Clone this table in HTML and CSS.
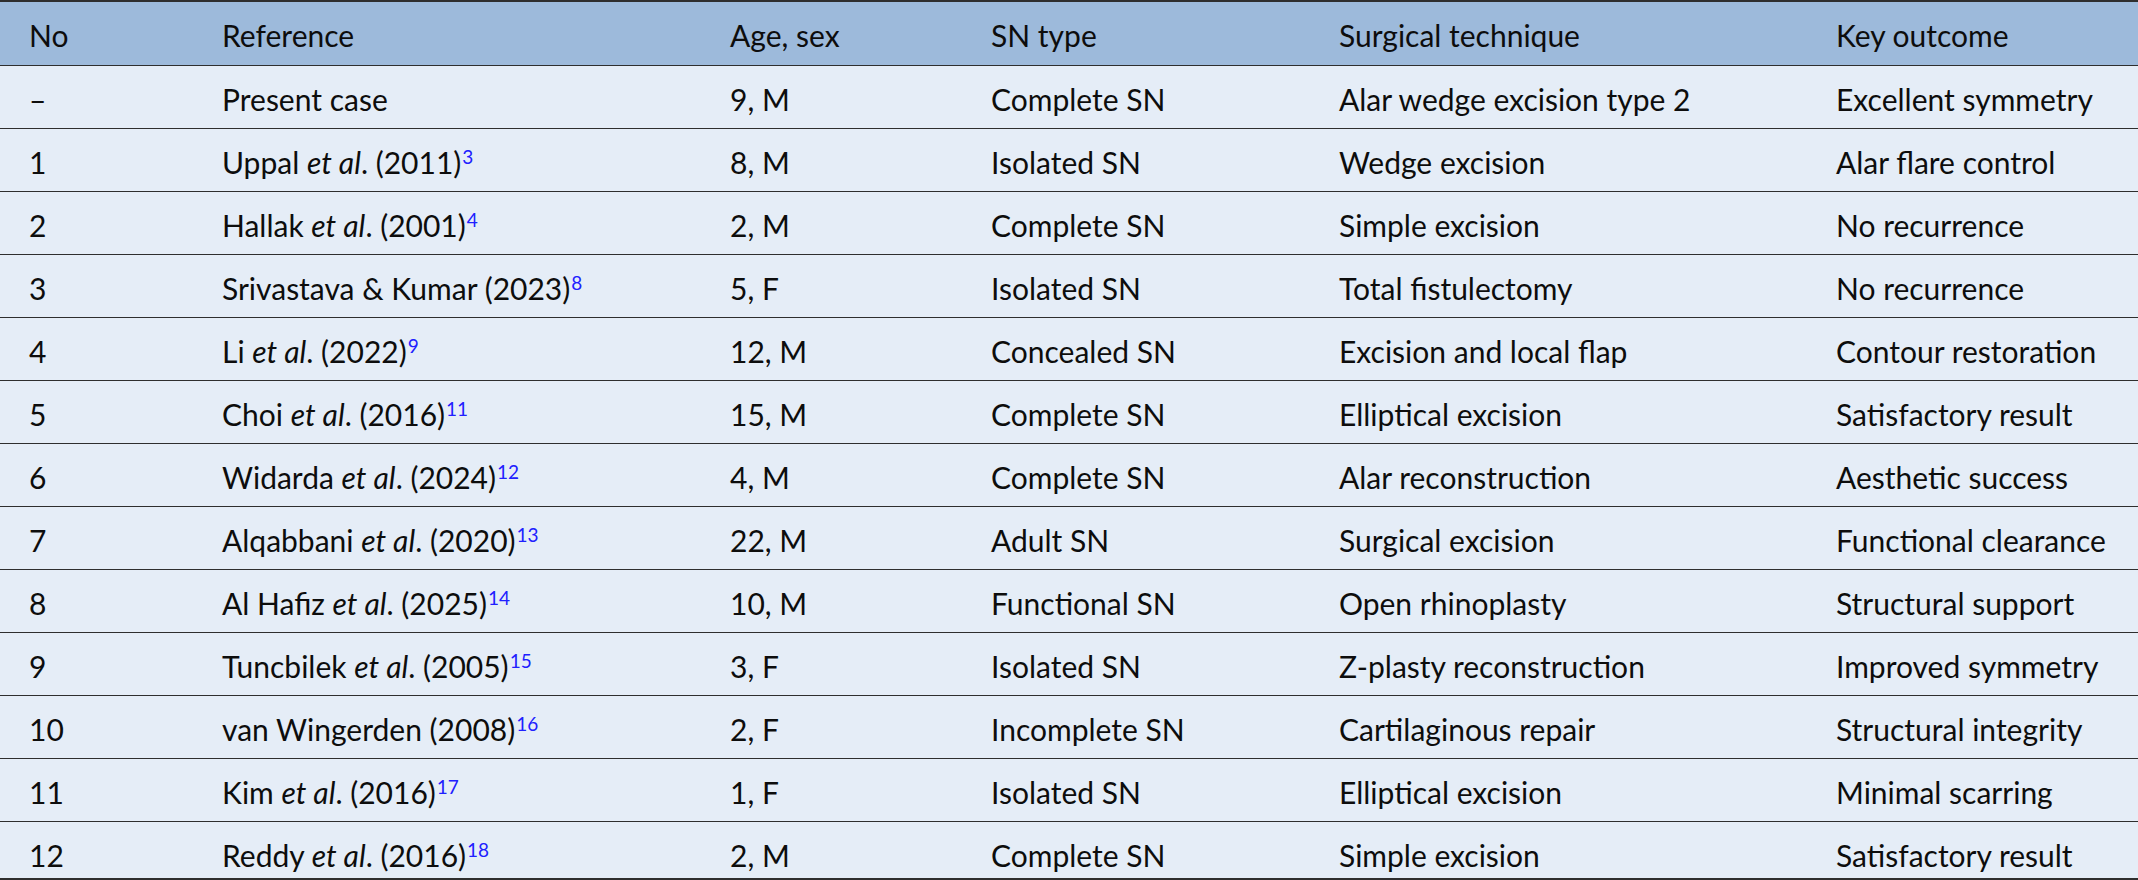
FILE: index.html
```html
<!DOCTYPE html>
<html lang="en">
<head>
<meta charset="utf-8">
<title>Surgical management of supernumerary nostril – comparison table</title>
<link rel="stylesheet" href="styles.css">
</head>
<body>
<table class="cases">
  <colgroup>
    <col class="c-no">
    <col class="c-ref">
    <col class="c-age">
    <col class="c-type">
    <col class="c-tech">
    <col class="c-out">
  </colgroup>
  <thead>
    <tr>
      <th>No</th>
      <th>Reference</th>
      <th>Age, sex</th>
      <th>SN type</th>
      <th>Surgical technique</th>
      <th>Key outcome</th>
    </tr>
  </thead>
  <tbody>
    <tr>
      <td>–</td>
      <td>Present case</td>
      <td>9, M</td>
      <td>Complete SN</td>
      <td>Alar wedge excision type 2</td>
      <td>Excellent symmetry</td>
    </tr>
    <tr>
      <td>1</td>
      <td>Uppal <i>et al</i>. (2011)<sup class="ref">3</sup></td>
      <td>8, M</td>
      <td>Isolated SN</td>
      <td>Wedge excision</td>
      <td>Alar flare control</td>
    </tr>
    <tr>
      <td>2</td>
      <td>Hallak <i>et al</i>. (2001)<sup class="ref">4</sup></td>
      <td>2, M</td>
      <td>Complete SN</td>
      <td>Simple excision</td>
      <td>No recurrence</td>
    </tr>
    <tr>
      <td>3</td>
      <td>Srivastava &amp; Kumar (2023)<sup class="ref">8</sup></td>
      <td>5, F</td>
      <td>Isolated SN</td>
      <td>Total fistulectomy</td>
      <td>No recurrence</td>
    </tr>
    <tr>
      <td>4</td>
      <td>Li <i>et al</i>. (2022)<sup class="ref">9</sup></td>
      <td>12, M</td>
      <td>Concealed SN</td>
      <td>Excision and local flap</td>
      <td>Contour restoration</td>
    </tr>
    <tr>
      <td>5</td>
      <td>Choi <i>et al</i>. (2016)<sup class="ref">11</sup></td>
      <td>15, M</td>
      <td>Complete SN</td>
      <td>Elliptical excision</td>
      <td>Satisfactory result</td>
    </tr>
    <tr>
      <td>6</td>
      <td>Widarda <i>et al</i>. (2024)<sup class="ref">12</sup></td>
      <td>4, M</td>
      <td>Complete SN</td>
      <td>Alar reconstruction</td>
      <td>Aesthetic success</td>
    </tr>
    <tr>
      <td>7</td>
      <td>Alqabbani <i>et al</i>. (2020)<sup class="ref">13</sup></td>
      <td>22, M</td>
      <td>Adult SN</td>
      <td>Surgical excision</td>
      <td>Functional clearance</td>
    </tr>
    <tr>
      <td>8</td>
      <td>Al Hafiz <i>et al</i>. (2025)<sup class="ref">14</sup></td>
      <td>10, M</td>
      <td>Functional SN</td>
      <td>Open rhinoplasty</td>
      <td>Structural support</td>
    </tr>
    <tr>
      <td>9</td>
      <td>Tuncbilek <i>et al</i>. (2005)<sup class="ref">15</sup></td>
      <td>3, F</td>
      <td>Isolated SN</td>
      <td>Z-plasty reconstruction</td>
      <td>Improved symmetry</td>
    </tr>
    <tr>
      <td>10</td>
      <td>van Wingerden (2008)<sup class="ref">16</sup></td>
      <td>2, F</td>
      <td>Incomplete SN</td>
      <td>Cartilaginous repair</td>
      <td>Structural integrity</td>
    </tr>
    <tr>
      <td>11</td>
      <td>Kim <i>et al</i>. (2016)<sup class="ref">17</sup></td>
      <td>1, F</td>
      <td>Isolated SN</td>
      <td>Elliptical excision</td>
      <td>Minimal scarring</td>
    </tr>
    <tr class="last">
      <td>12</td>
      <td>Reddy <i>et al</i>. (2016)<sup class="ref">18</sup></td>
      <td>2, M</td>
      <td>Complete SN</td>
      <td>Simple excision</td>
      <td>Satisfactory result</td>
    </tr>
  </tbody>
</table>
</body>
</html>
```
FILE: styles.css
```css
html, body {
  margin: 0;
  padding: 0;
  background: #ffffff;
}

body {
  font-family: Lato, "Noto Sans", "Liberation Sans", sans-serif;
  color: #0d0d0d;
  font-size: 30px;
}

.cases {
  width: 2138px;
  table-layout: fixed;
  border-collapse: collapse;
  border-top: 2px solid #2e2e2e;
  border-bottom: 3px solid #2e2e2e;
}

.c-no   { width: 193px; }
.c-ref  { width: 508px; }
.c-age  { width: 261px; }
.c-type { width: 348px; }
.c-tech { width: 497px; }
.c-out  { width: 331px; }

.cases th,
.cases td {
  text-align: left;
  font-weight: normal;
  vertical-align: top;
  line-height: 36px;
  padding: 15px 0 11px 29px;
  white-space: nowrap;
  height: 36px;
}

.cases thead th {
  background: #9dbadb;
  padding-bottom: 12px;
  border-bottom: 1px solid #2e2e2e;
}

.cases tbody td {
  background: #e5edf7;
  border-top: 1px solid #2e2e2e;
}

.cases tbody tr.last td {
  padding-bottom: 5px;
}

.cases i {
  font-style: italic;
}

.ref {
  color: #2020ff;
  font-size: 19px;
  line-height: 0;
  vertical-align: 10px;
  margin-left: 1px;
}
```
